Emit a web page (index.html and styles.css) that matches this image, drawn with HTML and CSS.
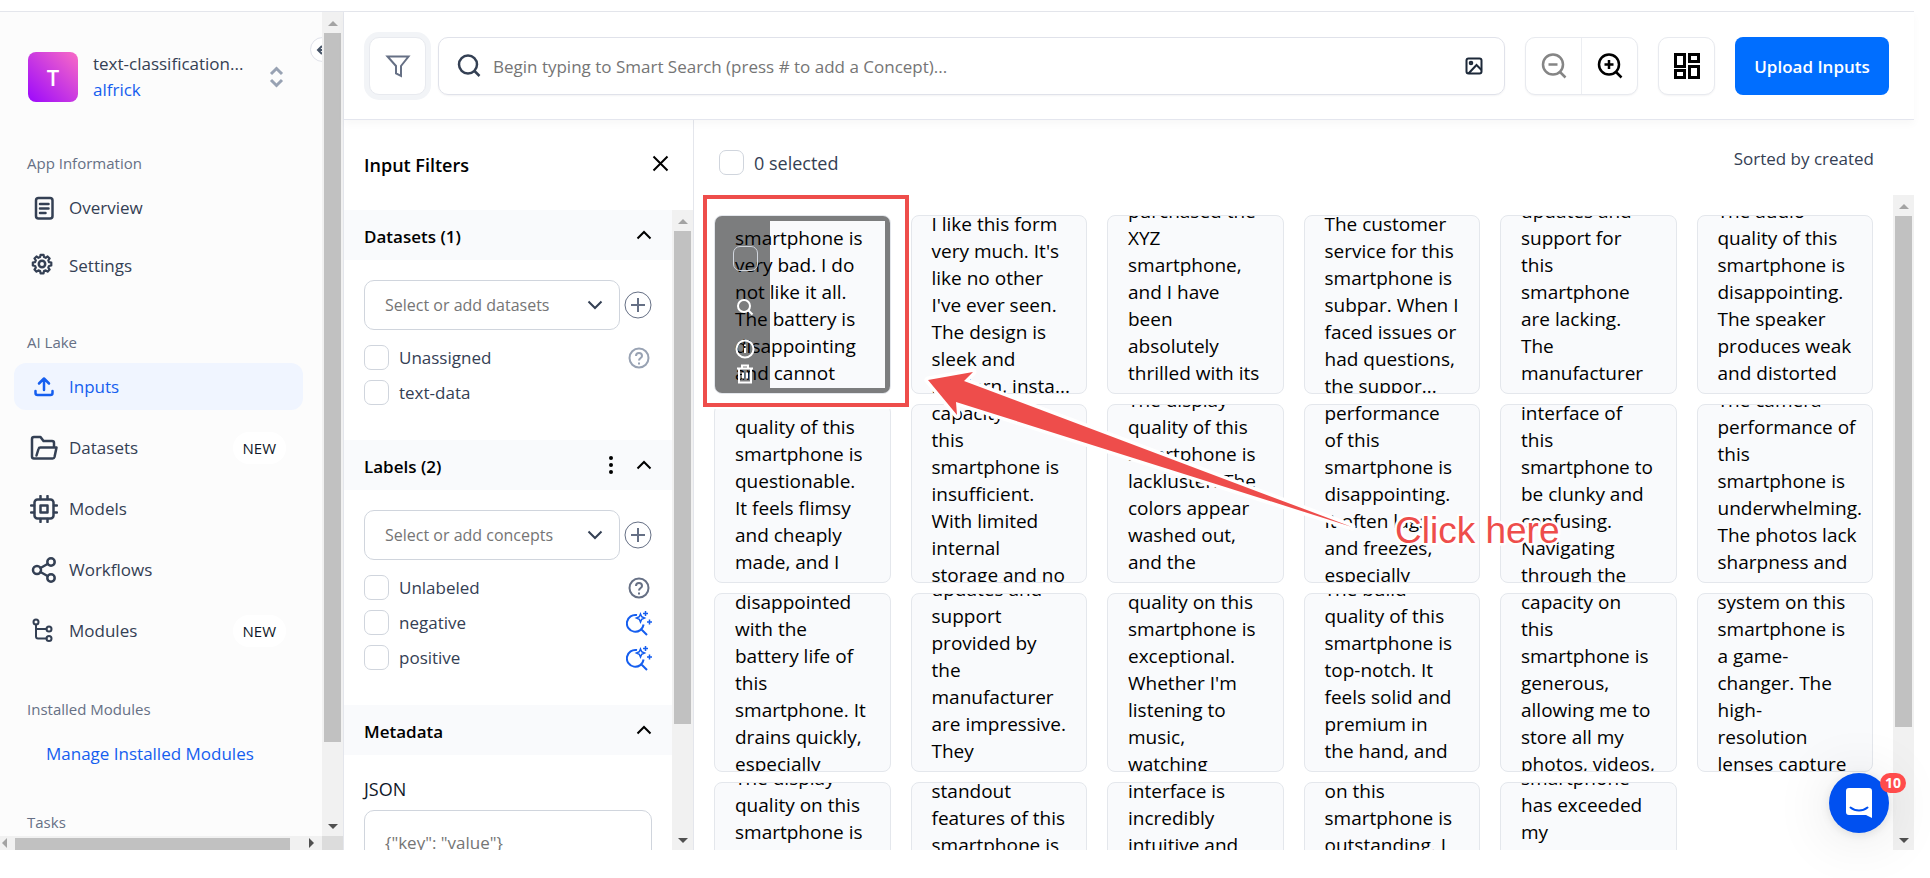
FILE: index.html
```html
<!DOCTYPE html>
<html lang="en">
<head>
<meta charset="utf-8">
<title>Inputs</title>
<link rel="stylesheet" href="styles.css">
</head>
<body>
<div class="page">
<div class="app">
  <aside class="sidebar">
    <div class="sidebar-body">
      <button class="collapse" aria-label="Collapse sidebar"><svg width="14" height="14" viewBox="0 0 14 14"><path d="M13 7H2M6 3L2 7l4 4"/></svg></button>
      <div class="account">
        <div class="avatar">T</div>
        <div class="account-names">
          <div class="account-app">text-classification...</div>
          <a class="account-user" href="#">alfrick</a>
        </div>
        <svg class="account-switch" width="15" height="22" viewBox="0 0 15 22"><path d="M2 8l5.500-5.500L13 8M2 14l5.500 5.500L13 14"/></svg>
      </div>
      <h2 class="nav-label">App Information</h2>
      <nav class="nav nav-info">
        <a class="nav-item" href="#"><svg class="icon" viewBox="0 0 28 28"><rect x="6" y="4" width="16.500" height="20.500" rx="2.500"/><path d="M10 10h8.500M10 14.500h8.500M10 19h5.500"/></svg>Overview</a>
        <a class="nav-item" href="#"><svg class="icon" viewBox="0 0 28 28"><circle cx="12" cy="12" r="3.200"/><path d="M10.300 2.500h3.400l.5 2.600 1.900.8 2.200-1.500 2.300 2.300-1.500 2.200.8 1.900 2.600.5v3.400l-2.600.5-.8 1.900 1.500 2.200-2.300 2.300-2.200-1.500-1.900.8-.5 2.600h-3.400l-.5-2.600-1.900-.8-2.200 1.500-2.300-2.300 1.500-2.200-.8-1.900-2.600-.5v-3.400l2.600-.5.8-1.900-1.500-2.200 2.300-2.300 2.200 1.500 1.900-.8z" transform="translate(1.500 .6) scale(.88)"/></svg>Settings</a>
      </nav>
      <h2 class="nav-label">AI Lake</h2>
      <nav class="nav">
        <a class="nav-item active" href="#"><svg class="icon" viewBox="0 0 28 28"><path d="M14 17V6M9 10.500L14 5.500l5 5M5.500 18v2a2 2 0 002 2h13a2 2 0 002-2v-2"/></svg>Inputs</a>
        <a class="nav-item" href="#"><svg class="icon" viewBox="0 0 28 28"><path d="M4 24.500a2 2 0 01-2-2V5a2 2 0 012-2h6.500l3 4H22a2 2 0 012 2v4M4 24.500h18.500a2 2 0 002-1.500L26.500 13.500H10.500a2 2 0 00-2 1.500L6.500 21.500"/></svg>Datasets<span class="pill">NEW</span></a>
        <a class="nav-item" href="#"><svg class="icon" viewBox="0 0 28 28"><rect x="4.500" y="4.500" width="19" height="19" rx="3"/><rect x="10.500" y="10.500" width="7" height="7"/><path d="M10.500 1v3M17.500 1v3M10.500 24v3M17.500 24v3M1 10.500h3M1 17.500h3M24 10.500h3M24 17.500h3"/></svg>Models</a>
        <a class="nav-item" href="#"><svg class="icon" viewBox="0 0 28 28"><circle cx="7" cy="14" r="4"/><circle cx="21" cy="6" r="3.700"/><circle cx="21" cy="22" r="3.700"/><path d="M10.500 12l7-4M10.500 16l7 4"/></svg>Workflows</a>
        <a class="nav-item" href="#"><svg class="icon thin" viewBox="0 0 28 28"><circle cx="6" cy="5" r="2.500"/><circle cx="19" cy="12" r="2.500"/><circle cx="19" cy="21.500" r="2.500"/><path d="M6 7.500v12a2 2 0 002 2h8.500M6 12h10.500"/></svg>Modules<span class="pill">NEW</span></a>
      </nav>
      <h2 class="nav-label spaced">Installed Modules</h2>
      <nav class="nav"><a class="nav-item manage" href="#">Manage Installed Modules</a></nav>
      <h2 class="nav-label last">Tasks</h2>
    </div>
    <div class="scroll-y"><i class="arrow up"></i><i class="thumb thumb-side"></i><i class="arrow down"></i></div>
    <div class="scroll-x"><i class="arrow left"></i><i class="thumb-x"></i><i class="arrow right"></i></div>
    <div class="scroll-corner"></div>
  </aside>

  <div class="workspace">
    <header class="header">
      <button class="square filter-button" aria-label="Filters"><svg width="26" height="24" viewBox="0 0 26 24"><path d="M2.500 2.500h21L16 12v10l-5-2.500V12z"/></svg></button>
      <div class="search">
        <svg width="26" height="26" viewBox="0 0 26 26"><circle cx="12" cy="11.500" r="9"/><path d="M18.500 18l5 5"/></svg>
        <input type="text" aria-label="Smart Search" placeholder="Begin typing to Smart Search (press # to add a Concept)...">
        <button class="image-button" aria-label="Search by image"><svg width="18" height="18" viewBox="0 0 18 18"><rect x="1.500" y="1.500" width="15" height="15" rx="2"/><circle cx="6" cy="6" r="1.300"/><path d="M3.500 16.500L11.500 8l5 5"/></svg></button>
      </div>
      <div class="zoom-group">
        <button class="zoom-out" aria-label="Zoom out"><svg width="28" height="28" viewBox="0 0 28 28"><circle cx="13" cy="12.500" r="10"/><path d="M8.500 12.500h9M20 20l5.500 5.500"/></svg></button>
        <button aria-label="Zoom in"><svg width="28" height="28" viewBox="0 0 28 28"><circle cx="13" cy="12.500" r="10"/><path d="M8.500 12.500h9M13 8v9M20 20l5.500 5.500"/></svg></button>
      </div>
      <button class="square layout-button" aria-label="Layout"><svg width="28" height="28" viewBox="0 0 28 28"><path d="M2.500 2.500h9v12h-9zM16.500 2.500h9v7h-9zM16.500 14.500h9v11h-9zM2.500 18.500h9v7h-9z"/></svg></button>
      <button class="upload">Upload Inputs</button>
    </header>

    <div class="content">
      <section class="filters">
        <div class="filters-head"><h1>Input Filters</h1><button class="plain" aria-label="Close filters"><svg width="17" height="17" viewBox="0 0 17 17"><path d="M1.500 1.500l14 14M15.500 1.500l-14 14"/></svg></button></div>
        <div class="filters-scroll">
          <div class="filters-body">
            <div class="group-head"><h2>Datasets (1)</h2><button class="plain" aria-label="Toggle datasets"><svg class="chevron" viewBox="0 0 16 10"><path d="M1.500 8.500L8 2l6.500 6.500"/></svg></button></div>
            <div class="group">
              <div class="picker-row">
                <div class="picker"><select aria-label="Datasets"><option>Select or add datasets</option></select><svg class="chevron" viewBox="0 0 16 10"><path d="M1.500 1.500L8 8l6.500-6.500"/></svg></div>
                <button class="plain" aria-label="Add dataset"><svg class="plus" viewBox="0 0 28 28"><circle cx="14" cy="14" r="13"/><path d="M14 7v14M7 14h14" stroke-width="2"/></svg></button>
              </div>
              <div class="option"><label><input type="checkbox">Unassigned</label><svg class="help muted" viewBox="0 0 22 22"><circle cx="11" cy="11" r="9.500"/><path d="M8 9a3 3 0 116 0c0 2-3 2-3 4.500M11 15.500v2"/></svg></div>
              <div class="option"><label><input type="checkbox">text-data</label></div>
            </div>
            <div class="group-head"><h2>Labels (2)</h2><button class="plain menu" aria-label="Label options"><svg width="6" height="20" viewBox="0 0 6 20"><circle cx="3" cy="3" r="2"/><circle cx="3" cy="10" r="2"/><circle cx="3" cy="17" r="2"/></svg></button><button class="plain" aria-label="Toggle labels"><svg class="chevron" viewBox="0 0 16 10"><path d="M1.500 8.500L8 2l6.500 6.500"/></svg></button></div>
            <div class="group">
              <div class="picker-row">
                <div class="picker"><select aria-label="Concepts"><option>Select or add concepts</option></select><svg class="chevron" viewBox="0 0 16 10"><path d="M1.500 1.500L8 8l6.500-6.500"/></svg></div>
                <button class="plain" aria-label="Add concept"><svg class="plus" viewBox="0 0 28 28"><circle cx="14" cy="14" r="13"/><path d="M14 7v14M7 14h14" stroke-width="2"/></svg></button>
              </div>
              <div class="option"><label><input type="checkbox">Unlabeled</label><svg class="help" viewBox="0 0 22 22"><circle cx="11" cy="11" r="9.500"/><path d="M8 9a3 3 0 116 0c0 2-3 2-3 4.500M11 15.500v2"/></svg></div>
              <div class="option"><label><input type="checkbox">negative</label><svg class="spark" viewBox="0 0 26 26"><path d="M11 5.100a8.400 8.400 0 106.600 9.400M15.500 19.500l5.500 5.500"/><path class="fine" d="M14.500 4l1.200 2.800 2.800 1.200-2.800 1.200-1.200 2.800-1.200-2.800L10.500 8l2.800-1.200zM19.500 1v5M17 3.500h5M23.500 9.500v5M21 12h5"/></svg></div>
              <div class="option"><label><input type="checkbox">positive</label><svg class="spark" viewBox="0 0 26 26"><path d="M11 5.100a8.400 8.400 0 106.600 9.400M15.500 19.500l5.500 5.500"/><path class="fine" d="M14.500 4l1.200 2.800 2.800 1.200-2.800 1.200-1.200 2.800-1.200-2.800L10.500 8l2.800-1.200zM19.500 1v5M17 3.500h5M23.500 9.500v5M21 12h5"/></svg></div>
            </div>
            <div class="group-head"><h2>Metadata</h2><button class="plain" aria-label="Toggle metadata"><svg class="chevron" viewBox="0 0 16 10"><path d="M1.500 8.500L8 2l6.500 6.500"/></svg></button></div>
            <div class="group">
              <label class="json-label" for="json">JSON</label>
              <textarea id="json" placeholder='{"key": "value"}'></textarea>
            </div>
          </div>
          <div class="scroll-y"><i class="arrow up"></i><i class="thumb thumb-filters"></i><i class="arrow down"></i></div>
        </div>
      </section>

      <main class="results">
        <div class="results-head"><label><input type="checkbox">0 selected</label><span class="sorted">Sorted by created</span></div>
        <div class="results-scroll">
          <div class="cards">
            <article class="card low"><p>smartphone is<br>very bad. I do<br>not like it all.<br>The battery is<br>disappointing<br>and cannot</p>
              <div class="card-hover"><div class="card-tools">
                <input type="checkbox" aria-label="Select input">
                <svg class="tool-search" width="18" height="18" viewBox="0 0 18 18"><circle cx="8" cy="8" r="6"/><path d="M12.500 12.500l4 4"/></svg>
                <svg class="tool-info" width="20" height="20" viewBox="0 0 20 20"><circle cx="10" cy="10" r="8.500"/><path d="M10 9v5M10 5.500v1.500"/></svg>
                <svg width="18" height="20" viewBox="0 0 18 20"><path d="M1 4.500h16M6 4V1.500h6V4M3 5v13.500h12V5M7 8.500v6M11 8.500v6"/></svg>
              </div></div>
            </article>
            <article class="card"><p>I like this form<br>very much. It's<br>like no other<br>I've ever seen.<br>The design is<br>sleek and<br>modern, insta...</p></article>
            <article class="card high"><p>purchased the<br>XYZ<br>smartphone,<br>and I have<br>been<br>absolutely<br>thrilled with its</p></article>
            <article class="card"><p>The customer<br>service for this<br>smartphone is<br>subpar. When I<br>faced issues or<br>had questions,<br>the suppor...</p></article>
            <article class="card high"><p>updates and<br>support for<br>this<br>smartphone<br>are lacking.<br>The<br>manufacturer</p></article>
            <article class="card high"><p>The audio<br>quality of this<br>smartphone is<br>disappointing.<br>The speaker<br>produces weak<br>and distorted</p></article>

            <article class="card low"><p>quality of this<br>smartphone is<br>questionable.<br>It feels flimsy<br>and cheaply<br>made, and I</p></article>
            <article class="card"><p>capacity on<br>this<br>smartphone is<br>insufficient.<br>With limited<br>internal<br>storage and no</p></article>
            <article class="card high"><p>The display<br>quality of this<br>smartphone is<br>lackluster. The<br>colors appear<br>washed out,<br>and the</p></article>
            <article class="card"><p>performance<br>of this<br>smartphone is<br>disappointing.<br>It often lags<br>and freezes,<br>especially</p></article>
            <article class="card"><p>interface of<br>this<br>smartphone to<br>be clunky and<br>confusing.<br>Navigating<br>through the</p></article>
            <article class="card high"><p>The camera<br>performance of<br>this<br>smartphone is<br>underwhelming.<br>The photos lack<br>sharpness and</p></article>

            <article class="card"><p>disappointed<br>with the<br>battery life of<br>this<br>smartphone. It<br>drains quickly,<br>especially</p></article>
            <article class="card high"><p>updates and<br>support<br>provided by<br>the<br>manufacturer<br>are impressive.<br>They</p></article>
            <article class="card"><p>quality on this<br>smartphone is<br>exceptional.<br>Whether I'm<br>listening to<br>music,<br>watching</p></article>
            <article class="card high"><p>The build<br>quality of this<br>smartphone is<br>top-notch. It<br>feels solid and<br>premium in<br>the hand, and</p></article>
            <article class="card"><p>capacity on<br>this<br>smartphone is<br>generous,<br>allowing me to<br>store all my<br>photos, videos,</p></article>
            <article class="card"><p>system on this<br>smartphone is<br>a game-<br>changer. The<br>high-<br>resolution<br>lenses capture</p></article>

            <article class="card high"><p>The display<br>quality on this<br>smartphone is</p></article>
            <article class="card"><p>standout<br>features of this<br>smartphone is</p></article>
            <article class="card"><p>interface is<br>incredibly<br>intuitive and</p></article>
            <article class="card"><p>on this<br>smartphone is<br>outstanding. I</p></article>
            <article class="card high"><p>smartphone<br>has exceeded<br>my</p></article>
          </div>
          <div class="scroll-y"><i class="arrow up"></i><i class="thumb thumb-results"></i><i class="arrow down"></i></div>
        </div>
      </main>
    </div>
  </div>
  <button class="chat" aria-label="Open chat">
    <svg width="28" height="32" viewBox="0 0 28 32"><path fill="#fff" d="M4 1h20a3 3 0 013 3v27l-6-3H4a3 3 0 01-3-3V4a3 3 0 013-3z"/><path d="M5.500 20.500c5 4 12 4 17 0" fill="none" stroke="#0050f0" stroke-width="2" stroke-linecap="round"/></svg>
    <span class="chat-badge">10</span>
  </button>
</div>
<svg class="annotation" width="880" height="380" viewBox="700 190 880 380">
  <rect class="halo" x="705" y="197" width="202" height="208"/>
  <rect class="frame" x="705" y="197" width="202" height="208"/>
  <path class="halo" d="M928 380L973 372L964 381L1352 527L956 402L957 415Z"/>
  <path class="arrow-shape" d="M928 380L973 372L964 381L1352 527L956 402L957 415Z"/>
  <text x="1395" y="543">Click here</text>
</svg>
</div>
</body>
</html>
```
FILE: styles.css
```css
* { box-sizing: border-box; }

body {
  margin: 0;
  background: #fff;
  color: #101828;
  font-family: "Open Sans", "Noto Sans", sans-serif;
  font-size: 17px;
}

h1, h2, p { margin: 0; }
a { text-decoration: none; }
button, input, select, textarea { font: inherit; color: inherit; }
button { cursor: pointer; padding: 0; }
svg { fill: none; stroke: currentColor; stroke-width: 2; flex: none; display: block; }

.page {
  position: relative;
  height: 100vh;
  padding: 11px 16px 28px 0;
  overflow: hidden;
}

.app {
  position: relative;
  height: 100%;
  display: flex;
  border-top: 1px solid #e4e6ec;
}

/* Scrollbars */
.scroll-y {
  width: 21px;
  flex: none;
  display: flex;
  flex-direction: column;
  align-items: center;
  background: #f1f1f1;
}
.arrow { flex: none; border: 5px solid transparent; }
.arrow.up { margin: 4px 0 7px; border-bottom-color: #a3a3a3; }
.arrow.down { margin: auto 0 2px; border-top-color: #505050; }
.arrow.left { border-right-color: #a3a3a3; }
.arrow.right { margin-left: auto; margin-right: 3px; border-left-color: #505050; }
.thumb { width: 17px; background: #c1c1c1; }
.thumb-side { height: 86%; }
.thumb-filters { height: 77%; }
.thumb-results { height: 78%; }

/* Sidebar */
.sidebar {
  width: 344px;
  flex: none;
  display: grid;
  grid-template: minmax(0, 1fr) 14px / minmax(0, 1fr) 21px;
  border-right: 1px solid #e4e6ec;
  background: #fcfcfc;
}
.sidebar-body {
  position: relative;
  overflow: hidden;
  padding: 39px 20px 0 14px;
}
.scroll-x { display: flex; align-items: center; background: #f1f1f1; overflow: hidden; }
.scroll-x .arrow.left { margin-left: -3px; margin-right: 8px; }
.thumb-x { width: 275px; height: 12px; margin-top: 2px; background: #c1c1c1; }
.scroll-corner { background: #dcdcdc; }

.collapse {
  position: absolute;
  top: 25px;
  right: -13px;
  width: 25px;
  height: 25px;
  display: grid;
  place-items: center;
  border: 1px solid #e0e2ea;
  border-radius: 50%;
  background: #fff;
  color: #475467;
}

.account { display: flex; align-items: center; padding: 0 18px 0 14px; }
.avatar {
  width: 50px;
  height: 50px;
  display: grid;
  place-items: center;
  border-radius: 8px;
  background: linear-gradient(45deg, #a00dfa 5%, #f96cc5 100%);
  color: #fff;
  font-size: 22px;
  font-weight: 600;
}
.account-names { flex: 1; margin-left: 15px; line-height: 26px; white-space: nowrap; color: #344054; font-weight: 500; }
.account-user { color: #155eef; font-weight: 400; }
.account-switch { color: #98a2b3; stroke-width: 3; }

.nav-label {
  margin: 41px 0 9px 13px;
  color: #667085;
  font-size: 15px;
  font-weight: 500;
  line-height: 24px;
}
.account + .nav-label { margin-top: 48px; }
.nav-label.spaced { margin-top: 43px; }
.nav-label.last { margin-top: 33px; }
.nav { display: flex; flex-direction: column; gap: 14px; margin-right: -1px; }
.nav-info { gap: 11px; }
.nav-item {
  min-height: 47px;
  display: flex;
  align-items: center;
  gap: 11px;
  padding: 0 17px 0 16px;
  border-radius: 12px;
  color: #344054;
  font-weight: 500;
}
.nav-item.active { background: #f0f5ff; color: #155eef; }
.nav-item.manage { padding-left: 32px; color: #155eef; }
.icon { width: 28px; height: 28px; stroke-width: 2.5; stroke-linejoin: round; stroke-linecap: round; }
.icon.thin { stroke-width: 2; }
.pill {
  margin-left: auto;
  padding: 4px 10px;
  border-radius: 16px;
  background: #fff;
  color: #101828;
  font-size: 15px;
  line-height: 24px;
}

/* Header */
.workspace { flex: 1; min-width: 0; display: flex; flex-direction: column; }
.header {
  position: relative;
  display: flex;
  align-items: center;
  gap: 20px;
  padding: 25px 25px 24px;
  border-bottom: 1px solid #e4e6ee;
  box-shadow: 0 4px 8px rgba(16, 24, 40, .03);
}
.square, .zoom-group {
  height: 58px;
  border: 1px solid #e8eaef;
  border-radius: 10px;
  background: #fff;
  box-shadow: 0 1px 2px rgba(16, 24, 40, .05);
}
.square { width: 57px; display: grid; place-items: center; flex: none; }
.filter-button { color: #667085; margin-right: -8px; box-shadow: 0 0 0 5px #f2f4f7; }
.search {
  flex: 1;
  height: 58px;
  display: flex;
  align-items: center;
  padding-left: 17px;
  border: 1px solid #e0e2ea;
  border-radius: 10px;
  box-shadow: 0 1px 2px rgba(16, 24, 40, .05);
  color: #344054;
}
.search svg { stroke-width: 2.5; }
.search input { flex: 1; min-width: 0; height: 50px; margin-left: 1px; padding: 0 10px; border: 0; background: transparent; }
.search input::placeholder { color: #757575; opacity: 1; }
.image-button { width: 60px; height: 50px; display: grid; place-items: center; border: 0; background: none; color: #1d2939; }
.image-button svg { stroke-width: 2; }
.zoom-group { width: 113px; display: flex; flex: none; }
.zoom-group button { flex: 1; display: grid; place-items: center; border: 0; background: none; color: #000; }
.zoom-group .zoom-out { border-right: 1px solid #eceef2; color: #858585; }
.zoom-group svg { stroke-width: 2.5; }
.layout-button { color: #000; }
.layout-button svg { stroke-width: 3; }
.upload { width: 154px; height: 58px; border: 0; border-radius: 8px; background: #006eff; color: #fff; font-weight: 600; flex: none; }

/* Filters */
.content { flex: 1; min-height: 0; display: flex; }
.filters { width: 350px; flex: none; display: flex; flex-direction: column; border-right: 1px solid #e4e6ec; }
.filters-head { height: 90px; flex: none; display: flex; align-items: center; justify-content: space-between; padding: 0 24px 3px 20px; color: #000; }
.filters-head h1 { padding-top: 3px; font-size: 18px; font-weight: 600; }
.plain { border: 0; background: none; }
.filters-scroll { flex: 1; min-height: 0; display: flex; }
.filters-body { flex: 1; min-width: 0; overflow: hidden; }
.group-head { height: 50px; display: flex; align-items: center; padding: 0 20px; background: #f9fafc; color: #000; }
.group-head h2 { flex: 1; padding-top: 2px; font-size: 17px; font-weight: 600; }
.chevron { width: 16px; height: 10px; }
.menu { margin-right: 22px; }
.menu svg { fill: #000; stroke: none; }
.group { padding: 20px 20px 25px; }
.picker-row { display: flex; align-items: center; gap: 4px; margin-bottom: 15px; color: #667085; }
.picker { position: relative; flex: 1; }
.picker select {
  width: 100%;
  height: 50px;
  padding: 0 40px 0 20px;
  appearance: none;
  border: 1px solid #d0d5dd;
  border-radius: 10px;
  background: #fff;
  color: #757575;
  font-size: 16px;
  font-weight: 500;
}
.picker .chevron { position: absolute; right: 17px; top: 20px; color: #344054; pointer-events: none; }
.plus { width: 28px; height: 28px; stroke-width: 1; }
.option { display: flex; align-items: center; justify-content: space-between; height: 25px; margin-bottom: 10px; }
.option label, .results-head label { display: flex; align-items: center; gap: 10px; }
input[type="checkbox"] { appearance: none; flex: none; width: 25px; height: 25px; margin: 0; border: 1px solid #d0d5dd; border-radius: 7px; background: #fff; }
.option label { color: #344054; }
.help { width: 22px; height: 22px; margin-right: 2px; color: #667085; }
.help.muted { color: #98a2b3; }
.spark { width: 26px; height: 26px; color: #155eef; }
.spark .fine { stroke-width: 1.5; }
.json-label { display: block; padding: 2px 0 8px; line-height: 25px; color: #101828; font-size: 18px; }
#json { display: block; width: 100%; height: 110px; padding: 20px; resize: none; border: 1px solid #d0d5dd; border-radius: 10px; font-weight: 500; }
#json::placeholder { color: #757575; opacity: 1; }

/* Results */
.results { flex: 1; min-width: 0; display: flex; flex-direction: column; }
.results-head { height: 75px; flex: none; display: flex; justify-content: space-between; align-items: flex-start; padding: 30px 40px 0 25px; color: #344054; font-size: 18px; }
.results-head label { height: 25px; }
.sorted { font-size: 17px; line-height: 18px; }
.results-scroll { flex: 1; min-height: 0; display: flex; }
.cards {
  flex: 1;
  min-width: 0;
  overflow: hidden;
  display: grid;
  grid-template-columns: repeat(6, minmax(0, 1fr));
  grid-auto-rows: 179px;
  gap: 10px 20px;
  padding: 20px;
}
.card {
  position: relative;
  overflow: hidden;
  padding: 0 20px;
  border: 1px solid #e4e7ec;
  border-radius: 8px;
  background: #f9fafc;
  color: #000;
  font-size: 19px;
  line-height: 27px;
  white-space: nowrap;
}
.card p { margin-top: -5px; }
.card.high p { margin-top: -18px; }
.card.low p { margin-top: 9px; }
.card-hover { position: absolute; inset: 0; border: 5px solid rgba(0, 0, 0, .5); }
.card-tools {
  width: 50px;
  height: 100%;
  display: flex;
  flex-direction: column;
  align-items: center;
  padding-top: 25px;
  background: rgba(0, 0, 0, .5);
  color: #fff;
}
.card-tools input[type="checkbox"] { background: transparent; border-color: #d0d5dd; }
.tool-search { margin: 27px 0 23px; }
.tool-info { margin-bottom: 5px; }

/* Chat launcher */
.chat {
  position: absolute;
  right: 25px;
  bottom: 17px;
  width: 60px;
  height: 60px;
  display: grid;
  place-items: center;
  border: 0;
  border-radius: 50%;
  background: #0050f0;
  box-shadow: 0 2px 10px rgba(0, 0, 0, .1), 0 4px 60px rgba(0, 0, 0, .12);
}
.chat svg { stroke: none; }
.chat-badge {
  position: absolute;
  top: 0;
  right: -17px;
  padding: 0 5px;
  border-radius: 10px;
  background: #ff4c4c;
  color: #fff;
  font-size: 14px;
  font-weight: 700;
  line-height: 20px;
}

/* Callout drawn over the results */
.annotation { position: absolute; left: 700px; top: 190px; pointer-events: none; }
.annotation .halo { stroke: #fff; stroke-width: 8; stroke-linejoin: round; }
.annotation path.halo { stroke-width: 7; fill: #fff; }
.annotation .frame { stroke: #ee4d4b; stroke-width: 4; }
.annotation .arrow-shape { fill: #ee4d4b; stroke: none; }
.annotation text {
  fill: #ee4d4b;
  stroke: #fff;
  stroke-width: 5;
  stroke-linejoin: round;
  paint-order: stroke;
  font-family: "Liberation Sans", Arial, sans-serif;
  font-size: 37px;
}
```
